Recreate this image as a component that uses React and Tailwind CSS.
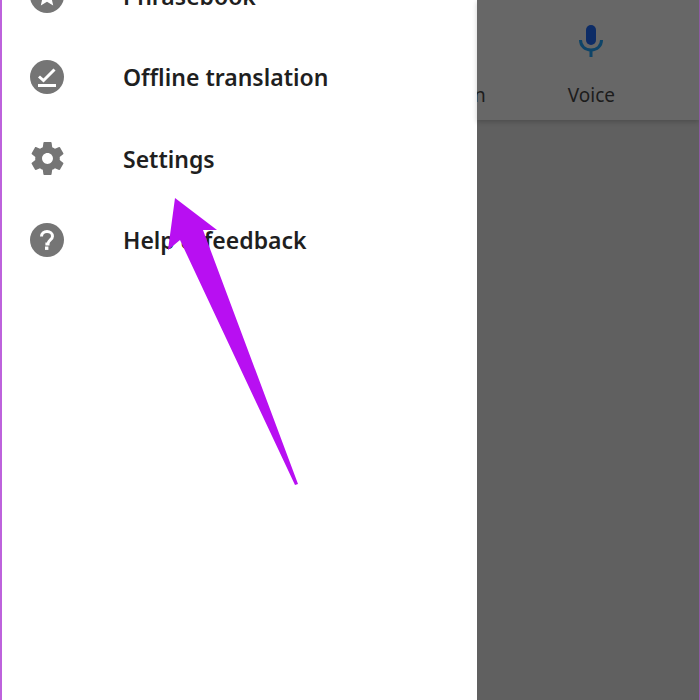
const menuFont = { fontFamily: '"Noto Sans", "Open Sans", sans-serif' };

function Phrasebook() {
  return (
    <svg viewBox="0 0 34 34" className="w-[34px] h-[34px]">
      <circle cx="17" cy="17" r="17" fill="#757575" />
      <path d="M17 7.500l2.900 6.500 7.100.7-5.400 4.700 1.600 7-6.200-3.700-6.200 3.700 1.600-7-5.400-4.700 7.100-.7z" fill="#fff" />
    </svg>
  );
}

function OfflineIcon() {
  return (
    <svg viewBox="0 0 34 34" className="w-[34px] h-[34px]">
      <circle cx="17" cy="17" r="17" fill="#757575" />
      <path d="M9 16.500l4.500 4 11-11" fill="none" stroke="#fff" strokeWidth="3" />
      <rect x="8" y="24" width="18" height="3" fill="#fff" />
    </svg>
  );
}

function GearIcon() {
  return (
    <svg viewBox="0 0 24 24" className="w-[41px] h-[41px] shrink-0">
      <path
        fill="#757575"
        d="M19.140 12.940c.04-.3.06-.61.06-.94 0-.32-.02-.64-.07-.94l2.030-1.580a.49.49 0 0 0 .12-.61l-1.920-3.320a.488.488 0 0 0-.59-.22l-2.390.96c-.5-.38-1.030-.7-1.620-.94l-.36-2.540a.484.484 0 0 0-.48-.41h-3.840c-.24 0-.43.17-.47.41l-.36 2.540c-.59.24-1.130.57-1.620.94l-2.390-.96c-.22-.08-.47 0-.59.22L2.740 8.870c-.12.21-.08.47.12.61l2.030 1.580c-.05.3-.09.63-.09.94s.02.64.07.94l-2.030 1.580a.49.49 0 0 0-.12.61l1.920 3.320c.12.22.37.29.59.22l2.390-.96c.5.38 1.030.7 1.620.94l.36 2.540c.05.24.24.41.48.41h3.840c.24 0 .44-.17.47-.41l.36-2.540c.59-.24 1.130-.56 1.620-.94l2.390.96c.22.08.47 0 .59-.22l1.920-3.320c.12-.22.07-.47-.12-.61l-2.010-1.580zM12 15.200c-1.760 0-3.200-1.440-3.200-3.200s1.440-3.200 3.200-3.200 3.200 1.440 3.200 3.200-1.440 3.200-3.200 3.200z"
      />
    </svg>
  );
}

function HelpIcon() {
  return (
    <svg viewBox="0 0 34 34" className="w-[34px] h-[34px]">
      <circle cx="17" cy="17" r="17" fill="#757575" />
      <path d="M11.500 13.500c0-3 2.400-5 5.500-5s5.500 2 5.500 4.800c0 3.600-4.500 3.700-4.500 7.700h-2.600" fill="none" stroke="#fff" strokeWidth="3" />
      <rect x="15" y="23.500" width="3.400" height="3.400" fill="#fff" />
    </svg>
  );
}

function MenuRow({ icon, label }) {
  return (
    <div className="flex h-[81.5px] items-center">
      <div className="flex w-[90px] shrink-0 justify-center">{icon}</div>
      <span className="ml-[31px] text-[23px] font-semibold text-[#1f1f1f]">{label}</span>
    </div>
  );
}

export default function App() {
  return (
    <div className="relative flex h-[700px] w-[700px] overflow-hidden bg-white" style={menuFont}>
      <div className="w-[2px] shrink-0 bg-[#bd62dc]" />
      {/* drawer, scrolled so the first row is cut off */}
      <div className="w-[475px] shrink-0 -mt-[45px] bg-white">
        <MenuRow icon={<Phrasebook />} label="Phrasebook" />
        <MenuRow icon={<OfflineIcon />} label="Offline translation" />
        <MenuRow icon={<GearIcon />} label="Settings" />
        <MenuRow icon={<HelpIcon />} label="Help & feedback" />
      </div>

      {/* dimmed page behind the drawer */}
      <div className="flex min-w-0 flex-1 flex-col bg-[#606060]">
        <div className="flex h-[120px] items-end justify-end overflow-hidden bg-[#676767] pb-[12px] pr-[84px] shadow-[0_2px_5px_rgba(0,0,0,0.2)]">
          <span className="shrink-0 text-[19px] leading-[26px] text-[#1c1c1c]">Conversation</span>
          <div className="ml-[82px] flex shrink-0 flex-col items-center">
            <svg viewBox="0 0 24 32" className="mb-[25px] h-[32px] w-[24px]">
              <rect x="7" y="0" width="10" height="20" rx="5" fill="#0d2c66" />
              <path d="M1.500 15c0 6 4.500 10 10.500 10s10.500-4 10.500-10" fill="none" stroke="#0e4468" strokeWidth="3" />
              <rect x="10.500" y="24" width="3" height="8" fill="#0e4468" />
            </svg>
            <span className="text-[19px] leading-[26px] text-[#1c1c1c]">Voice</span>
          </div>
        </div>
      </div>
      <div className="w-[1px] shrink-0 bg-[#8f5aa3]" />

      {/* purple annotation arrow */}
      <svg viewBox="0 0 700 700" className="pointer-events-none absolute inset-0 h-[700px] w-[700px]">
        <polygon points="175,198 217,230 203,230 298,484 295,485 180,240 168,250" fill="#b80ff2" />
      </svg>
    </div>
  );
}
